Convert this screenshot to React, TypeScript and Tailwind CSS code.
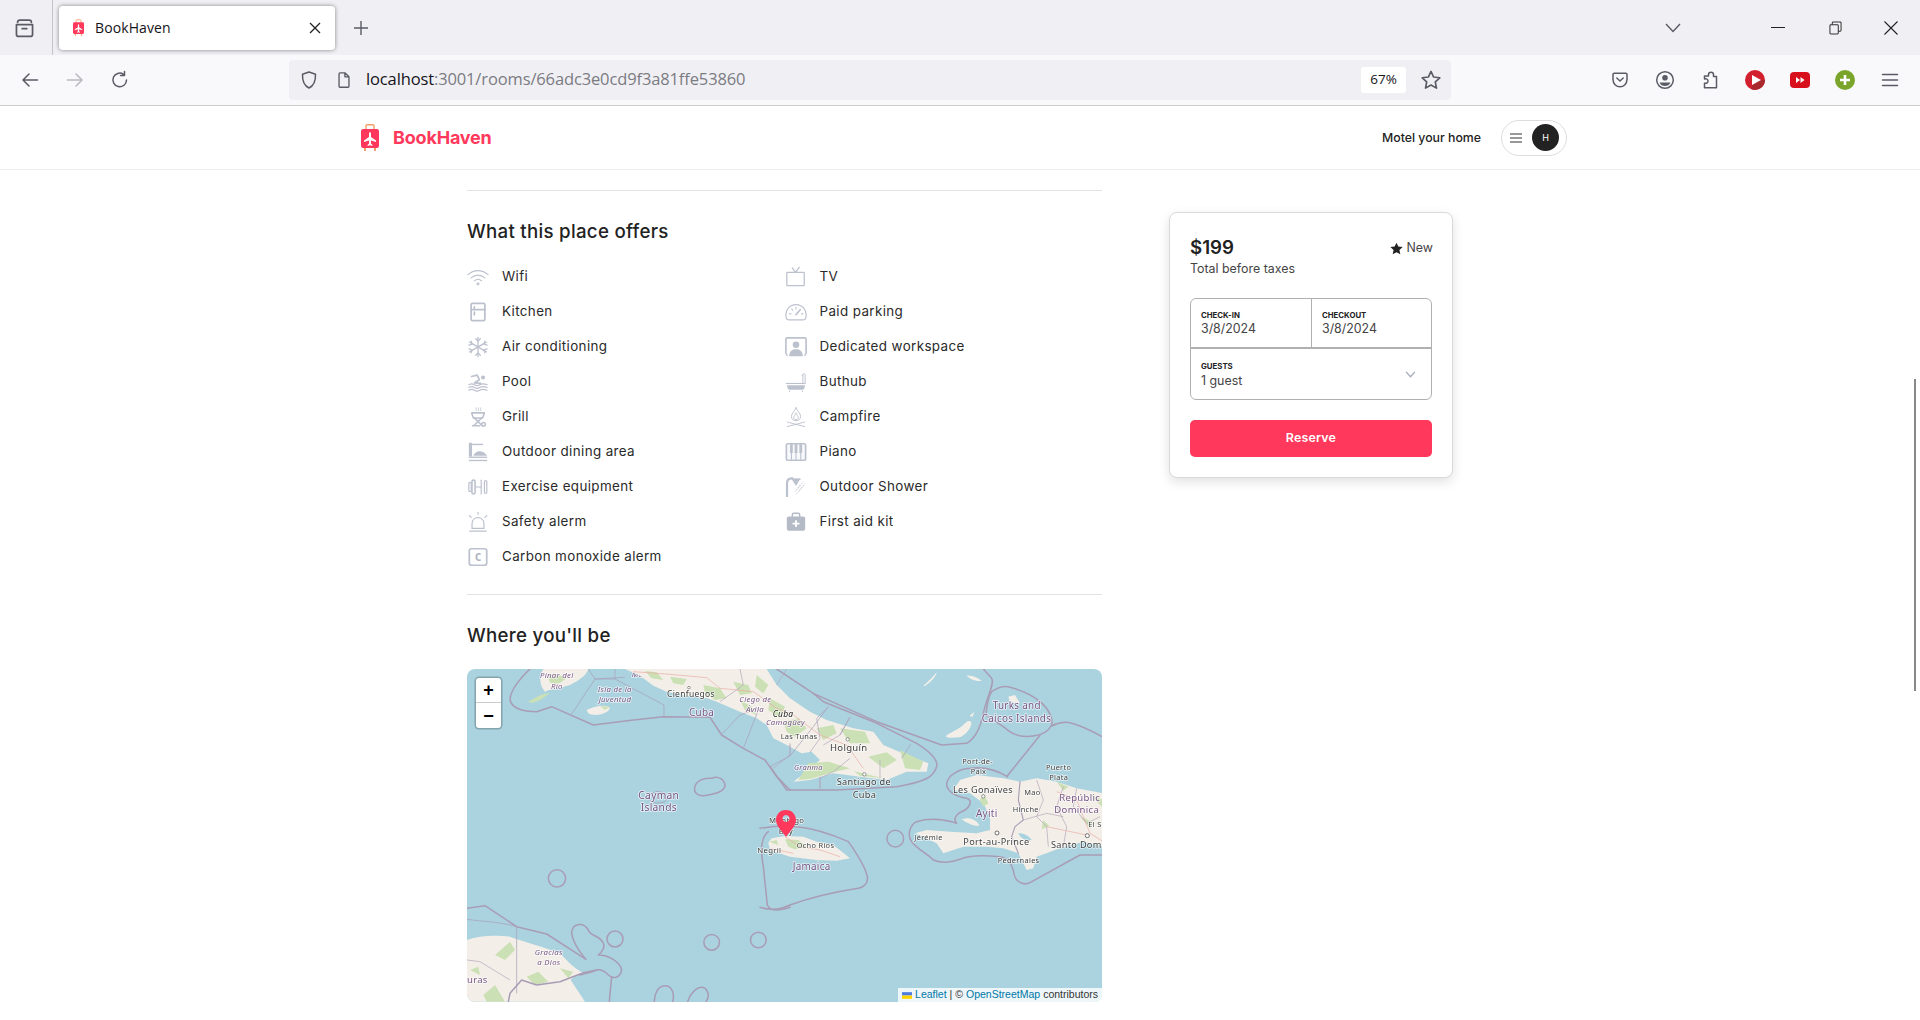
import React from "react";

const C = "#bcc1ce";
const ic = "w-[22px] h-[22px] shrink-0";

function Sv({ children, size = 24, cls = ic, stroke = C, sw = 1.5 }: any) {
  return (
    <svg viewBox={`0 0 ${size} ${size}`} className={cls} fill="none" stroke={stroke} strokeWidth={sw} strokeLinecap="round" strokeLinejoin="round">
      {children}
    </svg>
  );
}

const Wifi = () => (
  <Sv sw={1.2}>
    <path d="M1 9.5C7.5 3.5 16.5 3.5 23 9.5" />
    <path d="M4.5 13C9 9 15 9 19.5 13" />
    <path d="M8 16.3C10.5 14 13.5 14 16 16.3" />
    <circle cx="12" cy="19.5" r="1" fill={C} />
  </Sv>
);
const Fridge = () => (
  <Sv sw={1.9}>
    <rect x="4.5" y="2.5" width="15" height="19" rx="1.5" />
    <path d="M4.5 9.5H19.5M8 6.5V7.5M8 12V15" />
  </Sv>
);
const Snow = () => (
  <Sv sw={1.4}>
    <path d="M12 1.5V22.5M2.9 6.7L21.1 17.3M2.9 17.3L21.1 6.7" />
    <path d="M9.5 3L12 5.5L14.5 3M9.5 21L12 18.5L14.5 21M2 10L5.4 9L4.5 5.5M22 14L18.6 15L19.5 18.5M2 14L5.4 15L4.5 18.5M22 10L18.6 9L19.5 5.5" />
  </Sv>
);
const Pool = () => (
  <Sv sw={1.2}>
    <circle cx="17.5" cy="7" r="2.2" fill={C} stroke="none" />
    <path d="M5 6L11 4.5L13.5 9.5L8 13L15 13.5" strokeWidth="1.8" />
    <path d="M2 15C4 13.8 6 13.8 8 15S12 16.2 14 15S19 13.8 22 15" />
    <path d="M2 18C4 16.8 6 16.8 8 18S12 19.2 14 18S19 16.8 22 18" />
    <path d="M2 21C4 19.8 6 19.8 8 21S12 22.2 14 21S19 19.8 22 21" />
  </Sv>
);
const Grill = () => (
  <Sv sw={1.7}>
    <path d="M10 2V5M12.5 2V5M15 2V5" strokeWidth="0.8" />
    <path d="M5 7.5H19L17 13H7Z" />
    <path d="M8 13L16 21M16 13L8 21" />
    <path d="M6 21.5H14" />
    <circle cx="18" cy="20" r="2" />
  </Sv>
);
const Dining = () => (
  <svg viewBox="0 0 24 24" className={ic} fill={C}>
    <rect x="2" y="2" width="3.5" height="15" />
    <rect x="5.5" y="3" width="12" height="1.5" />
    <path d="M7 16C9 10 17 9 22 16Z" />
    <rect x="2" y="17" width="20" height="1.5" />
    <rect x="2" y="20.5" width="20" height="1.5" />
  </svg>
);
const Dumbbell = () => (
  <Sv sw={1.3}>
    <rect x="2" y="7" width="2.6" height="10" rx="1.2" />
    <rect x="5.4" y="4.5" width="3.4" height="15" rx="1.5" strokeWidth="1.7" />
    <path d="M9 12H15.5" />
    <path d="M15.5 4.5V19.5" />
    <rect x="19" y="5" width="2.6" height="14" rx="1.2" />
  </Sv>
);
const Alarm = () => (
  <Sv sw={1.3}>
    <path d="M5.5 19V14C5.5 5 18.5 5 18.5 14V19Z" />
    <path d="M3 22H21M12 1.5V3.5M2.5 5L4.5 7M21.5 5L19.5 7" />
  </Sv>
);
const CO = () => (
  <svg viewBox="0 0 24 24" className={ic}>
    <rect x="2.5" y="3" width="19" height="18" rx="2.5" fill="none" stroke={C} strokeWidth="1.9" />
    <text x="12" y="16.3" textAnchor="middle" fontSize="12" fontWeight="700" fontFamily="'DejaVu Sans Mono',monospace" fill="#aeb4c2">C</text>
  </svg>
);
const Tv = () => (
  <Sv sw={1.4}>
    <rect x="2" y="7" width="19" height="14.5" rx="0.8" />
    <path d="M8 2L11.5 7L15.5 1.5" />
  </Sv>
);
const Gauge = () => (
  <Sv sw={1.3}>
    <path d="M1.5 19C-1 9 6 4 12 4S25 9 22.5 19C22.2 20.5 21 20.5 20 20.5H4C3 20.5 1.8 20.5 1.5 19Z" />
    <path d="M12 15L16.5 9.5" strokeWidth="1.8" />
    <path d="M5 14H6.5M7.5 9L8.5 10M12 7V8.5M18 14H19.5" />
  </Sv>
);
const Desk = () => (
  <svg viewBox="0 0 24 24" className={ic} fill="none">
    <path d="M1 20V3.5C1 2.5 1.5 2 2.5 2H21.5C22.5 2 23 2.5 23 3.5V20" stroke={C} strokeWidth="1.8" />
    <circle cx="12" cy="9.5" r="3.6" fill={C} />
    <path d="M4.5 22C5 16 8 14.5 12 14.5S19 16 19.5 22Z" fill={C} />
    <path d="M1 20L3 21.5M23 20L21 21.5" stroke={C} strokeWidth="1.3" />
  </svg>
);
const Bath = () => (
  <svg viewBox="0 0 24 24" className={ic} fill="none">
    <path d="M19.5 13V4.5C19.5 3 21.5 2 22 4V13" stroke={C} strokeWidth="1" />
    <path d="M18 4.5H19.5" stroke={C} strokeWidth="1" />
    <rect x="1" y="13" width="21.5" height="1.2" fill={C} />
    <path d="M2 15.5H22L21 19C20.5 20 20 20.5 19 20.5H5C4 20.5 3.5 20 3 19Z" fill={C} />
    <path d="M5 21.5V23M19 21.5V23" stroke={C} strokeWidth="1.2" />
  </svg>
);
const Fire = () => (
  <Sv sw={1}>
    <path d="M12 2C13 5 17 7.5 17 11.5C17 14.5 14.7 16 12 16S7 14.5 7 11.5C7 8 10.5 6 12 2Z" />
    <path d="M12 8C13 10 14.5 11 14.5 12.7C14.5 14 13.3 14.8 12 14.8S9.5 14 9.5 12.7C9.5 11 11 10 12 8Z" />
    <path d="M2.5 17.5L21.5 22.5M21.5 17.5L2.5 22.5" />
  </Sv>
);
const Piano = () => (
  <svg viewBox="0 0 24 24" className={ic} fill="none">
    <rect x="1.5" y="3" width="21" height="18" rx="1.5" stroke={C} strokeWidth="1.8" fill="#f8f9fb" />
    <path d="M7 3.5V20.5M12 3.5V20.5M17.2 3.5V20.5" stroke={C} strokeWidth="1.2" />
    <path d="M5.5 3.5H8.5V13H5.5ZM10.5 3.5H13.5V13H10.5ZM15.7 3.5H18.7V13H15.7Z" fill={C} />
  </svg>
);
const Shower = () => (
  <svg viewBox="0 0 24 24" className={ic} fill="none">
    <path d="M2.2 23V8C2.2 4 4.5 2.5 7 2.5H9" stroke={C} strokeWidth="2.4" />
    <path d="M7 3L17 2.5L12 11Z" fill={C} />
    <path d="M13 15L20 6M15 17L22 8M12 20L20 11M11 17L17 9" stroke={C} strokeWidth="0.8" strokeDasharray="1.5 1" />
    <path d="M7 3L17 4" stroke={C} strokeWidth="1" />
  </svg>
);
const Kit = () => (
  <svg viewBox="0 0 24 24" className={ic} fill="none">
    <path d="M8 7V4C8 3 8.5 2.5 9.5 2.5H14.5C15.5 2.5 16 3 16 4V7" stroke="#b5bac7" strokeWidth="1.6" />
    <rect x="2" y="6" width="20" height="15.5" rx="2" fill="#b5bac7" />
    <path d="M12 10V17.5M8.2 13.8H15.8" stroke="#fff" strokeWidth="2" />
  </svg>
);

const left: [string, React.FC][] = [
  ["Wifi", Wifi],
  ["Kitchen", Fridge],
  ["Air conditioning", Snow],
  ["Pool", Pool],
  ["Grill", Grill],
  ["Outdoor dining area", Dining],
  ["Exercise equipment", Dumbbell],
  ["Safety alerm", Alarm],
  ["Carbon monoxide alerm", CO],
];
const right: [string, React.FC][] = [
  ["TV", Tv],
  ["Paid parking", Gauge],
  ["Dedicated workspace", Desk],
  ["Buthub", Bath],
  ["Campfire", Fire],
  ["Piano", Piano],
  ["Outdoor Shower", Shower],
  ["First aid kit", Kit],
];

function Amenity({ name, Icon }: { name: string; Icon: React.FC }) {
  return (
    <div className="flex items-center gap-[13px] h-[35px]">
      <Icon />
      <span className="text-[13.4px] text-[#2a2a2a] tracking-[0.38px]">{name}</span>
    </div>
  );
}

function Logo({ cls }: { cls: string }) {
  return (
    <svg viewBox="0 0 18 27" className={cls}>
      <path d="M5 6V2C5 1.2 5.5 .8 6.2 .8H11.8C12.5 .8 13 1.2 13 2V6" fill="none" stroke="#f4a06a" strokeWidth="1.4" />
      <rect x="0" y="5" width="18" height="19" rx="2.2" fill="#ff385c" />
      <rect x="3" y="24" width="2" height="3" fill="#f4a06a" />
      <rect x="13" y="24" width="2" height="3" fill="#f4a06a" />
      <path d="M9 8C9.7 8 10 9 10 10V13L15 16.5V18L10 16.5V19.5L11.5 21V22L9 21.3L6.5 22V21L8 19.5V16.5L3 18V16.5L8 13V10C8 9 8.3 8 9 8Z" fill="#fff" />
    </svg>
  );
}

const B = (p: any) => (
  <svg viewBox="0 0 20 20" className="w-5 h-5 shrink-0" fill="none" stroke="#5b5b66" strokeWidth="1.5" strokeLinecap="round" strokeLinejoin="round" {...p} />
);

const mapFont = "'Noto Sans','Open Sans',sans-serif";
type L = [string, number, number, number, string?, boolean?];
function Labels({ items }: { items: L[] }) {
  return (
    <>
      {items.map(([t, x, y, s, c, it], i) => (
        <text key={i} x={x} y={y} fontSize={s * 1.06} letterSpacing={0.9} fontFamily={mapFont} fill={c || "#3e3e3e"} fontStyle={it ? "italic" : "normal"} stroke="#ffffffb0" strokeWidth="5" paintOrder="stroke" strokeLinejoin="round">
          {t}
        </text>
      ))}
    </>
  );
}
const P = "#775585";

function MapArt() {
  const line = { fill: "none", stroke: "#a99db6", strokeWidth: 4.6, strokeLinejoin: "round" as const, strokeLinecap: "round" as const };
  const thin = { fill: "none", stroke: "#a9a0ba", strokeWidth: 2.2 };
  const land = "#f3efe8";
  const green = "#cbe0b4";
  const road = { fill: "none", stroke: "#eba9a4", strokeWidth: 2 };
  const prov = { fill: "none", stroke: "#b7a9bd", strokeWidth: 2.2 };
  return (
    <svg viewBox="0 0 635 333" className="absolute inset-0 w-full h-full blur-[0.3px]">
      {/* zoom-6 frame: left half of the map */}
      <g transform="translate(-7,-9) scale(0.33333)">
        <path d="M250,27C235,50 240,80 255,95C275,85 300,85 330,75C360,60 380,45 385,27Z" fill={land} />
        <path d="M205,125C230,110 250,100 270,100L240,120C225,128 210,130 205,125Z" fill={green} />
        <path d="M262,45C285,40 300,45 320,55L295,72L270,68Z" fill={green} />
        <path d="M380,150C400,140 440,130 450,145C440,165 400,170 385,160Z" fill={land} />
        <path d="M420,138L448,140L435,150Z" fill={green} />
        <path d="M21,840C60,825 110,825 150,830C190,845 250,860 300,880C320,900 340,925 372,940C350,945 340,950 332,960L375,1025H21Z" fill={land} />
        <path d="M105,885L150,845L165,870L135,900ZM200,950L235,935L265,965L225,975ZM70,1005L105,975L135,1025H80ZM300,925L340,935L325,955ZM30,930L55,920L60,945Z" fill={green} />
        <path d="M21,745L75,737L170,800L260,822L378,898" {...line} />
        <path d="M21,778C70,785 120,785 170,800V1000" {...thin} />
        <path d="M145,1025L150,1000L185,960L230,975L300,965L370,938L410,930" {...line} />
        <path d="M455,950L448,1025" {...line} />
        <path d="M21,900L60,905L150,960" {...prov} />
        <path d="M210,27C185,50 150,90 150,120C155,145 190,155 230,155L275,140L400,195L520,180L610,170L750,172L785,225L850,265L915,300L950,350L990,390" {...line} />
        <path d="M385,27L405,57L335,162M405,57L465,57V27M465,57L612,135V170M405,57L495,52" {...thin} />
        <circle cx="291" cy="655" r="26" {...line} />
        <circle cx="465" cy="837" r="24" {...line} />
        <circle cx="755" cy="847" r="23.5" {...line} />
        <circle cx="895" cy="840" r="23.5" {...line} />
        <path d="M704,385C705,365 730,352 755,355C775,345 795,360 795,378C790,395 770,400 745,405C720,412 702,402 704,385Z" {...line} />
        <path d="M375,895C355,870 335,840 335,815C340,790 370,785 385,810C390,830 425,825 432,855C432,872 420,880 415,885C445,885 480,905 485,930C480,955 460,958 445,945C435,935 420,925 405,932C390,938 375,940 360,945" {...line} />
        <path d="M583,1025C585,990 600,977 615,977C635,977 645,1000 638,1025" {...line} />
        <path d="M683,1025C695,990 720,975 735,985C750,1000 745,1015 738,1025" {...line} />
        <path d="M925,515C905,530 900,560 910,620L922,735C930,755 960,752 990,742" {...line} />
        <path d="M590,395C615,392 625,415 615,425C590,435 565,425 565,410C568,400 580,398 590,395Z" {...line} strokeWidth="2.4" />
        <Labels items={[
          ["Pinar del", 240, 55, 22, P, true],
          ["Río", 273, 86, 22, P, true],
          ["Isla de la", 413, 97, 22, P, true],
          ["Juventud", 416, 127, 22, P, true],
          ["Matanzas", 515, 52, 22, P, true],
          ["Cayman", 535, 417, 29, P],
          ["Islands", 542, 454, 29, P],
          ["Gracias", 224, 885, 22, P, true],
          ["a Dios", 232, 914, 22, P, true],
          ["uras", 21, 968, 27, P],
        ]} />
      </g>
      {/* zoom-9 frame: central Cuba */}
      <g transform="translate(153,-4) scale(0.33333)">
        <path d="M15,12L60,32L100,62L140,80L200,92L262,100L290,110L360,140L410,160L440,180L460,220L500,240L545,265L575,260L600,285L560,320L520,350L570,345L640,325L720,335L800,345L860,320L920,320L925,295L860,270L790,240L760,200L700,190L620,165L570,140L510,100L470,60L440,12Z" fill={land} />
        <path d="M75,18L110,22L130,45L95,40ZM150,35L200,42L190,60L160,55ZM250,60L300,70L320,100L285,105L255,85ZM340,50L385,60L395,85L360,90ZM410,30L445,60L430,85L405,65ZM450,100L495,125L480,160L445,135ZM360,105L395,125L410,150L375,135ZM490,170L535,160L560,190L525,215L500,200ZM590,190L640,180L650,205L610,225ZM660,190L735,200L750,235L690,235ZM565,295L625,290L690,310L640,322L570,342L535,345ZM700,318L790,340L720,332ZM745,275L800,262L830,285L790,310ZM840,255L910,290L900,315L855,310Z" fill={green} />
        <path d="M40,20L150,28L260,38L300,70L400,80L470,130M470,130L520,150L600,210L680,240L730,310" {...road} />
        <path d="M360,12L370,60L300,110M500,12L470,60M625,125L590,160L600,220L570,262M690,155L660,210L610,240M510,240V270L460,310M600,340V370M690,280L640,320L600,340M780,285V340" {...prov} />
        <path d="M305,208L360,150L415,130M370,250L415,135" {...thin} />
        <circle cx="207" cy="68" r="4" fill="#fff" stroke="#666" strokeWidth="2" />
        <Labels items={[["Cienfuegos", 141, 97, 24]]} />
      </g>
      {/* zoom-7 frame: right half of the map */}
      <g transform="translate(303,-9) scale(0.33333)">
        <path d="M-5,548L5,535L45,528L100,530L140,545L190,555L240,595L200,602L140,600L60,590L0,570Z" fill={land} />
        <path d="M45,538L85,540L110,560L75,568L55,560ZM-2,545L20,540L25,555Z" fill={green} />
        <path d="M45,530L90,560L150,570L210,590M0,565L70,580" {...road} />
        <path d="M570,360L620,345L700,355L750,365L800,355L860,365L920,385L1000,400V560L940,545L870,565L800,590L790,625L770,630L745,580L700,565L650,560L580,560L520,580L500,550L460,530L435,520L470,510L540,515L620,520L660,510L660,470L640,430L600,400L550,390Z" fill={land} />
        <path d="M640,400L655,430L640,440L630,420ZM860,365L895,380L880,392ZM930,470L975,488L960,505ZM820,480L838,498L815,508ZM960,402L1000,420V445Z" fill={green} />
        <path d="M590,475C605,472 625,485 628,497C615,500 590,490 575,478Z" fill={land} />
        <path d="M745,520C760,518 780,530 785,540C770,545 750,535 745,520Z" fill="#a8d2de" />
        <path d="M530,225C548,215 572,205 585,190C595,180 605,180 604,192C600,210 585,225 570,232C555,232 535,235 528,230Z" fill={land} />
        <path d="M460,77C475,65 490,50 500,37C498,50 485,65 465,78ZM590,47C605,45 625,55 635,62C620,65 600,58 590,47ZM598,168L613,155L608,170ZM715,110L735,105L750,130L720,125Z" fill={land} />
        <path d="M20,27L130,100L320,185L515,255L590,250C625,230 635,185 640,160C650,110 675,70 665,55L640,27" {...line} />
        <path d="M130,100L160,125L310,185L440,250C480,275 505,300 500,320C490,350 470,365 380,380L200,390L50,390L0,320" {...line} />
        <path d="M175,140L130,200L60,288L0,320M240,172L210,225M60,250V288M422,253L395,295M150,350V385" {...thin} />
        <path d="M665,95C680,85 700,75 720,82C750,90 780,100 810,125C835,145 850,175 845,195C835,215 815,225 790,228C760,232 735,228 715,212C695,195 660,175 648,165C650,140 655,110 665,95Z" {...line} />
        <path d="M845,198C860,190 880,185 900,188C930,195 970,215 1000,232" {...line} />
        <path d="M810,226L710,350" {...line} />
        <path d="M712,350C680,330 640,320 600,325C565,328 535,345 530,370C528,395 560,410 590,415C610,420 600,445 575,455C555,465 550,480 560,490C520,475 470,475 440,485C420,495 410,525 425,545C445,570 470,580 490,600C510,610 545,608 570,598C595,585 640,585 690,590C715,595 725,610 732,640C735,665 760,678 780,668L930,585H1000" {...line} />
        <path d="M750,365L745,420L760,480L735,500L725,530L745,580" {...line} strokeWidth="3.4" />
        <path d="M800,360L820,420L800,470L830,500L835,560M880,380L860,440L890,500L880,560M920,385L910,440L950,490L990,470M760,480L830,460L880,470" {...prov} />
        <path d="M860,395L920,420L960,520L1000,545M830,500L950,525" {...road} />
        <path d="M-30,505C0,500 40,495 80,500C130,505 180,520 235,545C260,580 285,620 292,650C295,670 285,680 265,685C200,695 130,710 60,735C40,745 10,755 -30,742" {...line} />
        <circle cx="376" cy="536" r="25" {...line} />
        <circle cx="233" cy="238" r="5" fill="#fff" stroke="#666" strokeWidth="2" />
        <circle cx="283" cy="343" r="5" fill="#fff" stroke="#666" strokeWidth="2" />
        <circle cx="640" cy="409" r="5" fill="#fff" stroke="#666" strokeWidth="2" />
        <circle cx="681" cy="519" r="6" fill="#fff" stroke="#555" strokeWidth="2.5" />
        <circle cx="952" cy="527" r="6" fill="#fff" stroke="#555" strokeWidth="2.5" />
        <Labels items={[
          ["Cuba", -243, 167, 28, P],
          ["Ciego de", -92, 126, 22, P, true],
          ["Ávila", -72, 156, 22, P, true],
          ["Cuba", 8, 170, 24, "#222", true],
          ["Camagüey", -12, 195, 22, P, true],
          ["Las Tunas", 32, 236, 21],
          ["Holguín", 180, 272, 27],
          ["Granma", 72, 329, 21, P, true],
          ["Santiago de", 200, 376, 26],
          ["Cuba", 248, 415, 26],
          ["Montego", -3, 490, 22],
          ["Bay", 26, 521, 22],
          ["Negril", -38, 580, 22],
          ["Ocho Rios", 80, 564, 21],
          ["Jamaica", 68, 629, 28, P],
          ["Turks and", 668, 148, 28, P],
          ["Caicos Islands", 635, 185, 28, P],
          ["Port-de-", 577, 311, 21],
          ["Paix", 602, 341, 21],
          ["Les Gonaïves", 549, 398, 26],
          ["Ayiti", 618, 470, 28, P],
          ["Jérémie", 433, 540, 21],
          ["Port-au-Prince", 580, 554, 26],
          ["Pedernales", 683, 608, 21],
          ["Mao", 763, 406, 21],
          ["Hinche", 728, 455, 21],
          ["Puerto", 828, 329, 21],
          ["Plata", 838, 359, 21],
          ["Repúblic", 868, 423, 27, P],
          ["Dominica", 853, 460, 27, P],
          ["El S", 955, 502, 21],
          ["Santo Dom", 843, 564, 26],
        ]} />
      </g>
      {/* pin */}
      <path fillRule="evenodd" d="M319,141C312.5,141 309,146 309,151C309,157 315,162 319,168C323,162 329,157 329,151C329,146 325.5,141 319,141ZM319,146A3.5,3.5 0 1 1 318.99,146Z" fill="#ff385c" />
    </svg>
  );
}

export default function App() {
  return (
    <div className="relative w-full h-[1020px] overflow-hidden bg-white flex flex-col font-['Inter',sans-serif]">
      {/* tab strip */}
      <div className="h-[55px] bg-[#f0f0f4] flex items-center shrink-0 font-['Open_Sans',sans-serif]">
        <div className="w-[53px] h-full border-r border-[#c4c4c8] flex items-center justify-center">
          <B className="w-[23px] h-[23px] -ml-[3px]">
            <path d="M4 5.5C4 4 4.8 3.5 6 3.5H14C15.2 3.5 16 4 16 5.5M3 7.5H17V16C17 17 16.4 17.7 15.3 17.7H4.7C3.6 17.7 3 17 3 16Z" />
            <path d="M8 11H12" />
          </B>
        </div>
        <div className="ml-[6px] w-[276px] h-[44px] bg-white rounded-[4px] shadow-[0_0_4px_rgba(0,0,0,0.45)] flex items-center pl-[14px] pr-[14px]">
          <Logo cls="w-[11px] h-[17px]" />
          <span className="ml-[11px] text-[14px] tracking-[0.1px] text-[#15141a] flex-1">BookHaven</span>
          <svg viewBox="0 0 12 12" className="w-3 h-3" fill="none" stroke="#222" strokeWidth="1.3"><path d="M1 1L11 11M11 1L1 11" /></svg>
        </div>
        <svg viewBox="0 0 16 16" className="w-4 h-4 ml-[18px]" fill="none" stroke="#5b5b66" strokeWidth="1.4"><path d="M8 1V15M1 8H15" /></svg>
        <div className="flex-1" />
        <svg viewBox="0 0 16 10" className="w-4 h-[10px] mr-[90px]" fill="none" stroke="#5b5b66" strokeWidth="1.4"><path d="M1 1L8 8.5L15 1" /></svg>
        <div className="w-[14px] h-px bg-[#222] mr-[44px] -mt-px" />
        <svg viewBox="0 0 14 14" className="w-[13px] h-[14px] mr-[42px]" fill="none" stroke="#333" strokeWidth="1.1"><rect x="1" y="3.5" width="9" height="10" rx="1" /><path d="M3.5 3.5V1.5C3.5 1 4 .5 4.5 .5H12C12.6 .5 13 1 13 1.5V9.5C13 10 12.6 10.5 12 10.5H10" /></svg>
        <svg viewBox="0 0 14 14" className="w-[14px] h-[14px] mr-[22px]" fill="none" stroke="#222" strokeWidth="1.1"><path d="M.5 .5L13.5 13.5M13.5 .5L.5 13.5" /></svg>
      </div>
      {/* nav bar */}
      <div className="h-[51px] bg-[#f9f9fb] border-b border-[#cccccc] flex items-center shrink-0 pb-px font-['Open_Sans',sans-serif]">
        <div className="w-[289px] flex items-center pl-[20px] gap-[25px]">
          <B><path d="M17.5 10H3M9 4L3 10L9 16" /></B>
          <B stroke="#b9b9bf"><path d="M2.5 10H17M11 4L17 10L11 16" /></B>
          <B><path d="M16.5 10A6.8 6.8 0 1 1 13.5 4.3M14.5 1.5V5.5H10.5" /></B>
        </div>
        <div className="w-[1162px] h-10 bg-[#f0f0f4] rounded-[4px] flex items-center pl-[10px] pr-[9px]">
          <B><path d="M10 2L3.5 4.3C3.3 10 4.5 15.5 10 18C15.5 15.5 16.7 10 16.5 4.3Z" /></B>
          <B className="w-[18px] h-[18px] ml-[16px]"><path d="M4.5 3C4.5 2.3 5 2 5.5 2H11L15.5 6.5V17C15.5 17.6 15 18 14.5 18H5.5C5 18 4.5 17.6 4.5 17ZM11 2V6.5H15.5" /></B>
          <div className="ml-[13px] text-[16.5px] tracking-[-0.13px] flex-1 text-[#15141a]">localhost<span className="text-[#7b7b82]">:3001/rooms/66adc3e0cd9f3a81ffe53860</span></div>
          <div className="w-[45px] h-[26px] bg-white rounded-[3px] flex items-center justify-center text-[13.5px] text-[#15141a]">67%</div>
          <B className="w-[22px] h-[22px] ml-[14px]"><path d="M10 2.2L12.4 7.3L18 8L13.9 11.8L15 17.4L10 14.6L5 17.4L6.1 11.8L2 8L7.6 7.3Z" /></B>
        </div>
        <div className="flex-1 flex items-center justify-end pr-[20px] gap-[25px]">
          <B><path d="M3 4.5C3 3.8 3.5 3.3 4.2 3.3H15.8C16.5 3.3 17 3.8 17 4.5V9.5C17 13.5 13.8 16.8 10 16.8S3 13.5 3 9.5Z" /><path d="M6.8 8L10 11L13.2 8" /></B>
          <B><circle cx="10" cy="10" r="8.3" /><circle cx="10" cy="7.8" r="2.8" fill="#5b5b66" stroke="none" /><path d="M4.5 12.5H15.5C14.5 15 12.5 16 10 16S5.5 15 4.5 12.5Z" fill="#5b5b66" stroke="none" /></B>
          <B><path d="M8.5 6V4.5C8.5 1.5 13.5 1.5 13.5 4.5V6.5H16.5V17.8H4.5V13.2C6.8 13.8 8 12.3 8 11S6.8 8.3 4.5 8.9V6Z" /></B>
          <svg viewBox="0 0 20 20" className="w-5 h-5"><circle cx="10" cy="10" r="10" fill="#d2202f" /><path d="M10 10L20 10A10 10 0 0 1 6 19Z" fill="#a92a2e" /><path d="M7 5L16 10L7 15Z" fill="#fff" /></svg>
          <svg viewBox="0 0 20 20" className="w-5 h-5"><rect y="2" width="20" height="16" rx="4" fill="#d8101c" /><path d="M6 7L10 10L6 13ZM10.5 7L14.5 10L10.5 13Z" fill="#fff" /></svg>
          <svg viewBox="0 0 20 20" className="w-5 h-5"><circle cx="10" cy="10" r="10" fill="#7aa52a" /><path d="M10 5V15M5 10H15" stroke="#fff" strokeWidth="2.6" /></svg>
          <B><path d="M2.5 4.5H17.5M2.5 10H17.5M2.5 15.5H17.5" /></B>
        </div>
      </div>
      {/* site header */}
      <header className="h-[64px] border-b border-[#eeeeee] flex items-center pl-[361px] pr-[353px] shrink-0">
        <Logo cls="w-[18px] h-[27px]" />
        <span className="ml-[14px] text-[18px] font-bold text-[#ff385c] tracking-[-0.2px]">BookHaven</span>
        <div className="flex-1" />
        <span className="mt-[1px] text-[12.3px] font-medium text-[#222]">Motel your home</span>
        <div className="ml-[20px] w-[66px] h-[36px] rounded-full border border-[#dddddd] flex items-center pl-[8px] gap-[10px]">
          <svg viewBox="0 0 12 10" className="w-3 h-[10px]" fill="none" stroke="#333" strokeWidth="1.2"><path d="M0 1H12M0 5H12M0 9H12" /></svg>
          <div className="w-[27px] h-[27px] rounded-full bg-[#222] text-white text-[9px] flex items-center justify-center">H</div>
        </div>
      </header>
      {/* page */}
      <main className="flex-1 flex pl-[467px] pt-[20px] items-start">
        <section className="w-[635px] border-t border-[#e2e2e2]">
          <h2 className="mt-[27px] h-[28px] leading-[28px] text-[18.7px] tracking-[0.28px] font-medium text-[#222]">What this place offers</h2>
          <div className="mt-[13px] grid grid-cols-2 pb-[10px]">
            <div className="flex flex-col">{left.map(([n, I]) => <Amenity key={n} name={n} Icon={I} />)}</div>
            <div className="flex flex-col">{right.map(([n, I]) => <Amenity key={n} name={n} Icon={I} />)}</div>
          </div>
          <div className="border-t border-[#e2e2e2] mt-[10px]" />
          <h2 className="mt-[27px] h-[28px] leading-[28px] text-[18.7px] tracking-[0.28px] font-medium text-[#222]">Where you'll be</h2>
          <div className="mt-[19px] relative h-[333px] rounded-[8px] overflow-hidden bg-[#aad3df]">
            <MapArt />
            <div className="absolute left-[9px] top-[9px] w-[25px] h-[50px] bg-white rounded-[3px] shadow-[0_0_0_1.5px_rgba(0,0,0,0.22)] flex flex-col font-['Liberation_Sans',sans-serif]">
              <div className="h-[25px] border-b border-[#cccccc] flex items-center justify-center text-[18px] font-bold text-black leading-none">+</div>
              <div className="h-[25px] flex items-center justify-center text-[18px] font-bold text-black leading-none">−</div>
            </div>
            <div className="absolute right-0 bottom-0 h-[14px] bg-white/80 pl-[4px] pr-[4px] flex items-center gap-[3px] text-[10.5px] text-[#333] font-['Liberation_Sans',sans-serif] whitespace-nowrap">
              <svg viewBox="0 0 12 8" className="w-[10px] h-[7px]"><rect width="12" height="4" fill="#4C7BE1" /><rect y="4" width="12" height="4" fill="#FFD500" /></svg>
              <span className="text-[#0078a8]">Leaflet</span><span>| ©</span><span className="text-[#0078a8]">OpenStreetMap</span><span>contributors</span>
            </div>
          </div>
        </section>
        <aside className="ml-[67px] mt-[22px] w-[284px] h-[266px] bg-white border border-[#d9d9d9] rounded-[8px] shadow-[0_4px_12px_rgba(0,0,0,0.12)] px-[20px] pt-[23px]">
          <div className="flex justify-between items-start">
            <div>
              <div className="text-[18.7px] leading-[24px] font-semibold text-[#222]">$199</div>
              <div className="text-[12.4px] leading-[18px] text-[#444]">Total before taxes</div>
            </div>
            <div className="flex items-center gap-[4px] mt-[3px] -mr-[1px] text-[12.4px] text-[#444]">
              <svg viewBox="0 0 20 20" className="w-[13px] h-[13px]" fill="#222"><path d="M10 1L12.8 7L19.5 7.8L14.5 12.3L15.9 19L10 15.6L4.1 19L5.5 12.3L.5 7.8L7.2 7Z" /></svg>
              New
            </div>
          </div>
          <div className="mt-[20px] h-[102px] border border-[#b0b0b0] rounded-[6px] flex flex-col">
            <div className="h-[50px] flex border-b-2 border-[#b0b0b0]">
              <div className="w-[121px] border-r border-[#b0b0b0] pl-[10px] pt-[11px]">
                <div className="text-[7.8px] leading-[10px] font-bold text-[#222]">CHECK-IN</div>
                <div className="text-[12.4px] leading-[16px] text-[#444] mt-[1px]">3/8/2024</div>
              </div>
              <div className="flex-1 pl-[10px] pt-[11px]">
                <div className="text-[7.8px] leading-[10px] font-bold text-[#222]">CHECKOUT</div>
                <div className="text-[12.4px] leading-[16px] text-[#444] mt-[1px]">3/8/2024</div>
              </div>
            </div>
            <div className="flex-1 flex items-center justify-between pl-[10px] pr-[15px]">
              <div className="pt-[2px]">
                <div className="text-[7.8px] leading-[10px] font-bold text-[#222]">GUESTS</div>
                <div className="text-[12.4px] leading-[16px] text-[#444] mt-[2px]">1 guest</div>
              </div>
              <svg viewBox="0 0 12 8" className="w-[11px] h-[7px]" fill="none" stroke="#a3acbb" strokeWidth="1.5"><path d="M1 1L6 6.5L11 1" /></svg>
            </div>
          </div>
          <button className="mt-[20px] w-full h-[37px] rounded-[5px] bg-[#ff385c] text-white text-[12.4px] tracking-[0.2px] font-semibold">Reserve</button>
        </aside>
      </main>
      {/* overlay scrollbar */}
      <div className="absolute left-[1914px] top-[379px] w-[2px] h-[312px] bg-[#888888]" />
    </div>
  );
}
